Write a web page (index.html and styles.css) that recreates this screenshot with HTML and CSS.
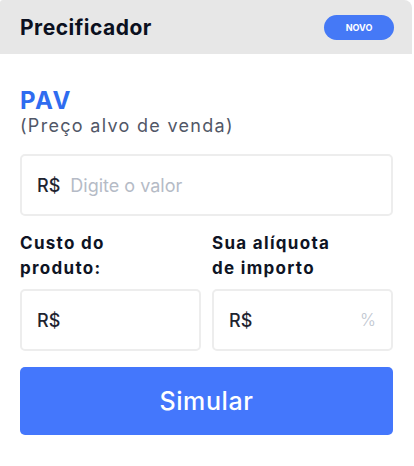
FILE: index.html
```html
<!DOCTYPE html>
<html lang="pt-BR">
<head>
  <meta charset="UTF-8" />
  <meta name="viewport" content="width=device-width, initial-scale=1.0" />
  <title>Precificador</title>
  <link rel="stylesheet" href="styles.css">
</head>
<body>
  <div class="card">
    <div class="header">
      <h1>Precificador</h1>
      <span class="badge">NOVO</span>
    </div>

    <div class="content">
      <div class="pav">PAV</div>
      <div class="pav-sub">(Preço alvo de venda)</div>

      <div class="field field-main">
        <span class="prefix">R$</span>
        <input type="text" placeholder="Digite o valor">
      </div>

      <div class="row">
        <div class="col">
          <label class="label">Custo do<br>produto:</label>
          <div class="field">
            <span class="prefix">R$</span>
            <input type="text">
          </div>
        </div>
        <div class="col">
          <label class="label">Sua alíquota<br>de importo</label>
          <div class="field">
            <span class="prefix">R$</span>
            <input type="text">
            <span class="suffix">%</span>
          </div>
        </div>
      </div>

      <button class="button">Simular</button>
    </div>
  </div>
</body>
</html>
```

FILE: styles.css
```css
* {
  box-sizing: border-box;
}
body {
  margin: 0;
  background-color: #fff;
  font-family: "Inter", "Noto Sans", sans-serif;
}
.card {
  width: 412px;
  border-radius: 3px 8px 0 0;
  overflow: hidden;
}
.header {
  height: 54px;
  background-color: #e7e7e7;
  display: flex;
  align-items: center;
  justify-content: space-between;
  padding: 0 18px 0 20px;
}
h1 {
  margin: 0;
  font-size: 21px;
  font-weight: 700;
  color: #0b1020;
  letter-spacing: 0.5px;
}
.badge {
  width: 70px;
  height: 25px;
  border-radius: 13px;
  background-color: #4579f6;
  color: #fff;
  font-size: 9px;
  font-weight: 700;
  display: flex;
  align-items: center;
  justify-content: center;
}
.content {
  padding: 33px 19px 0 20px;
}
.pav {
  font-size: 24px;
  font-weight: 700;
  line-height: 28px;
  color: #2f6cf0;
  letter-spacing: 1.5px;
}
.pav-sub {
  font-size: 18px;
  line-height: 22px;
  color: #515767;
  letter-spacing: 1.3px;
}
.field {
  height: 62px;
  border: 2px solid #ededed;
  border-radius: 5px;
  display: flex;
  align-items: center;
  padding: 0 15px;
}
.field-main {
  margin-top: 17px;
}
.prefix {
  font-size: 18px;
  font-weight: 500;
  color: #1f2430;
}
.field input {
  flex: 1;
  min-width: 0;
  border: none;
  outline: none;
  background: transparent;
  font-family: inherit;
  font-size: 18px;
  color: #1f2430;
  padding: 0 0 0 10px;
}
.field input::placeholder {
  color: #b5bbc6;
}
.suffix {
  font-size: 17px;
  font-weight: 300;
  color: #c0c6d0;
}
.row {
  display: grid;
  grid-template-columns: repeat(2, minmax(0, 1fr));
  gap: 11px;
  margin-top: 15px;
}
.label {
  display: block;
  font-size: 17px;
  font-weight: 700;
  line-height: 25px;
  color: #0e1424;
  letter-spacing: 1.3px;
  margin-bottom: 8px;
}
.button {
  display: block;
  width: 100%;
  height: 68px;
  margin-top: 16px;
  border: none;
  border-radius: 5px;
  background-color: #4477fc;
  color: #fff;
  font-family: inherit;
  font-size: 25px;
  font-weight: 500;
  letter-spacing: 0.6px;
  cursor: pointer;
}
```
